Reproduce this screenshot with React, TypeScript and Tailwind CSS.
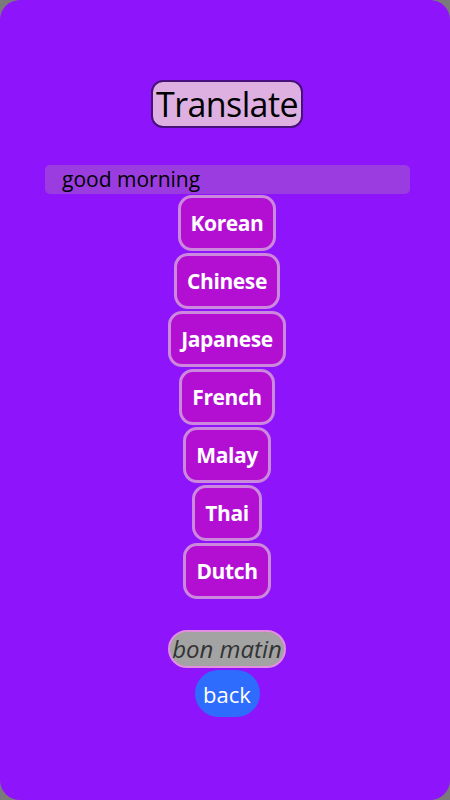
import React, { useState } from 'react'

const languages = ['Korean', 'Chinese', 'Japanese', 'French', 'Malay', 'Thai', 'Dutch']

export default function App() {
  const [text, setText] = useState('good morning')

  return (
    <div className="w-[450px] h-[800px] bg-[#7a7a7a]" style={{ fontFamily: '"Open Sans", "Noto Sans", sans-serif' }}>
      <div className="w-full h-full bg-[#8e14fc] rounded-[20px] flex flex-col items-center pt-[80px]">
        <h1 className="h-[48px] px-[3px] flex items-center bg-[#deb0e2] border-2 border-[#48107a] rounded-[12px] text-[34px] text-black leading-none tracking-[-0.6px] ml-[4px]">
          Translate
        </h1>

        <input
          value={text}
          onChange={e => setText(e.target.value)}
          className="mt-[37px] ml-[5px] w-[365px] h-[29px] bg-[#9b3ce0] rounded-[5px] pl-[17px] text-[21px] text-black outline-none"
        />

        <div className="flex flex-col items-center gap-[2px] mt-[1px] ml-[4px]">
          {languages.map(lang => (
            <button
              key={lang}
              className="h-[56px] px-[10px] bg-[#b30fd3] border-[3px] border-[#cc88dc] rounded-[14px] text-white font-bold text-[21px] leading-none tracking-[-0.4px]"
            >
              {lang}
            </button>
          ))}
        </div>

        <div className="mt-[31px] ml-[4px] h-[38px] px-[2px] flex items-center bg-[#a3a3a3] border-2 border-[#e28fe0] rounded-full italic text-[24px] text-[#333] leading-none">
          bon matin
        </div>

        <button className="mt-[2px] ml-[4px] w-[65px] h-[47px] bg-[#2d6cfd] rounded-full text-white text-[22px] leading-none">
          back
        </button>
      </div>
    </div>
  )
}
